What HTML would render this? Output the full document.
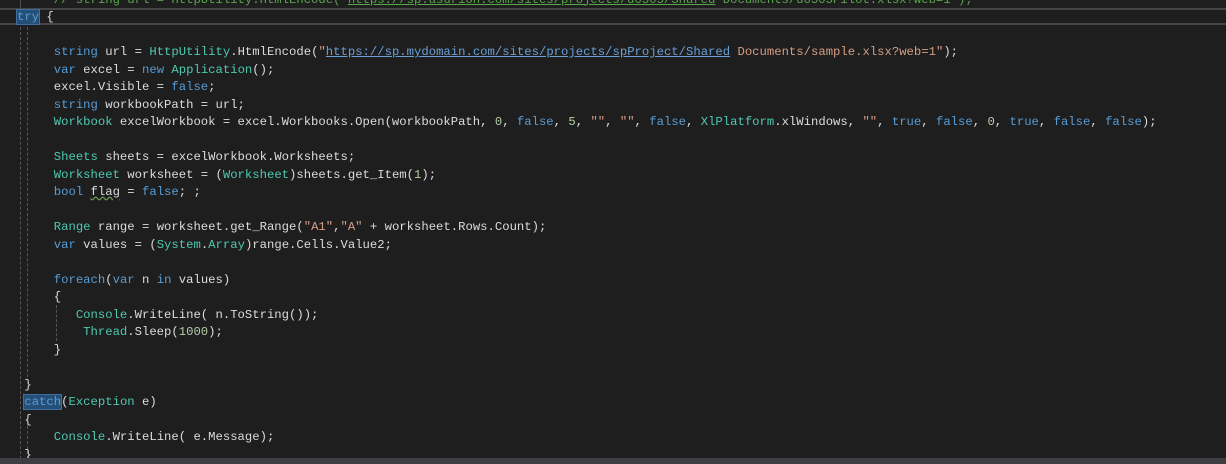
<!DOCTYPE html>
<html><head><meta charset="utf-8"><style>
html,body{margin:0;padding:0;background:#1e1e1e;width:1226px;height:464px;overflow:hidden;position:relative}
.code{position:absolute;left:17px;top:-8.5px;font-family:"Liberation Mono",monospace;font-size:12.25px;color:#dcdcdc}
.l{height:17.5px;line-height:17.5px;white-space:pre}
.k{color:#569cd6}.t{color:#4ec9b0}.s{color:#d69d85}.n{color:#b5cea8}.c{color:#57a64a}
.u{text-decoration:underline}
.su{color:#6a9fd8;text-decoration:underline}
.sel{background:#264f78;outline:1px solid #3f6fa0}
.cur{position:absolute;left:0;top:8px;width:1226px;height:17px;border-top:2px solid #464646;border-bottom:2px solid #464646;box-sizing:border-box}
.g{position:absolute;width:0;border-left:1px dashed #555}
.sb{position:absolute;left:0;top:458px;width:1226px;height:6px;background:#3e3e42}
.sq{text-decoration:underline wavy #6a9955}
</style></head><body>
<div class="cur"></div>
<div class="g" style="left:20px;top:0;height:10px"></div>
<div class="g" style="left:20px;top:27px;height:437px"></div>
<div class="g" style="left:27px;top:27px;height:350px"></div>
<div class="g" style="left:27px;top:426px;height:38px"></div>
<div class="g" style="left:56px;top:305px;height:36px"></div>
<div class="code"><div class="l">     <span class="c">// string url = HttpUtility.HtmlEncode("<span class="u">https://sp.asurion.com/sites/projects/d0505/Shared</span> Documents/d0505Pilot.xlsx?web=1");</span></div><div class="l"><span class="k sel">try</span> {</div><div class="l"> </div><div class="l">     <span class="k">string</span> url = <span class="t">HttpUtility</span>.HtmlEncode(<span class="s">"</span><span class="su">https://sp.mydomain.com/sites/projects/spProject/Shared</span><span class="s"> Documents/sample.xlsx?web=1"</span>);</div><div class="l">     <span class="k">var</span> excel = <span class="k">new</span> <span class="t">Application</span>();</div><div class="l">     excel.Visible = <span class="k">false</span>;</div><div class="l">     <span class="k">string</span> workbookPath = url;</div><div class="l">     <span class="t">Workbook</span> excelWorkbook = excel.Workbooks.Open(workbookPath, <span class="n">0</span>, <span class="k">false</span>, <span class="n">5</span>, <span class="s">""</span>, <span class="s">""</span>, <span class="k">false</span>, <span class="t">XlPlatform</span>.xlWindows, <span class="s">""</span>, <span class="k">true</span>, <span class="k">false</span>, <span class="n">0</span>, <span class="k">true</span>, <span class="k">false</span>, <span class="k">false</span>);</div><div class="l"> </div><div class="l">     <span class="t">Sheets</span> sheets = excelWorkbook.Worksheets;</div><div class="l">     <span class="t">Worksheet</span> worksheet = (<span class="t">Worksheet</span>)sheets.get_Item(<span class="n">1</span>);</div><div class="l">     <span class="k">bool</span> <span class="sq">flag</span> = <span class="k">false</span>; ;</div><div class="l"> </div><div class="l">     <span class="t">Range</span> range = worksheet.get_Range(<span class="s">"A1"</span>,<span class="s">"A"</span> + worksheet.Rows.Count);</div><div class="l">     <span class="k">var</span> values = (<span class="t">System</span>.<span class="t">Array</span>)range.Cells.Value2;</div><div class="l"> </div><div class="l">     <span class="k">foreach</span>(<span class="k">var</span> n <span class="k">in</span> values)</div><div class="l">     {</div><div class="l">        <span class="t">Console</span>.WriteLine( n.ToString());</div><div class="l">         <span class="t">Thread</span>.Sleep(<span class="n">1000</span>);</div><div class="l">     }</div><div class="l"> </div><div class="l"> }</div><div class="l"> <span class="k sel">catch</span>(<span class="t">Exception</span> e)</div><div class="l"> {</div><div class="l">     <span class="t">Console</span>.WriteLine( e.Message);</div><div class="l"> }</div></div>
<div class="sb"></div>
</body></html>
